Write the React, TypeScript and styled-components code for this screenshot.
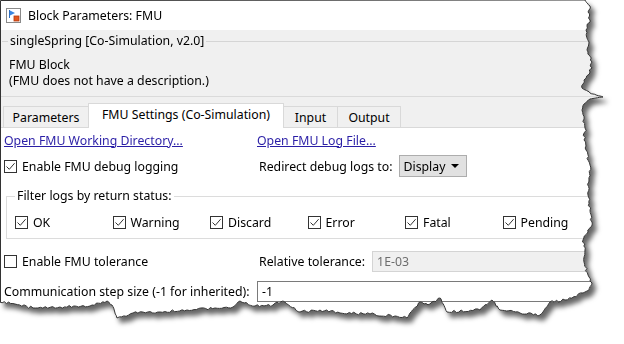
import React from 'react'
import styled, { createGlobalStyle } from 'styled-components'

const GlobalStyle = createGlobalStyle`
  html, body { margin: 0; padding: 0; background: #fff; }
  body {
    font-family: 'Noto Sans', 'Open Sans', sans-serif;
    font-size: 12.3px;
    color: #000;
  }
  * { box-sizing: border-box; }
`

// ---- torn paper edge ----
type Pt = [number, number]

const rightEdge: Pt[] = [
  [585, 0], [590, 6], [588, 12], [590, 20], [586, 30], [589, 42], [588, 52], [592, 62],
  [590, 72], [584, 80], [582, 88], [590, 93], [603, 97], [590, 99], [584, 104], [582, 110],
  [585, 128], [584, 140], [586, 150], [590, 165], [589, 180], [588, 195], [590, 210],
  [592, 222], [588, 232], [583, 240], [585, 250], [584, 262], [588, 275], [592, 283], [589, 290],
]

const bottomEdge: Pt[] = [
  [583, 293], [565, 300], [550, 302], [540, 315], [520, 313], [500, 310], [492, 300],
  [480, 310], [447, 312], [440, 298], [430, 304], [420, 302], [407, 318], [395, 316],
  [370, 314], [340, 313], [320, 310], [300, 312], [283, 301], [273, 305], [255, 306],
  [240, 301], [233, 307], [215, 308], [187, 310], [160, 312], [133, 313], [117, 318],
  [112, 305], [107, 301], [90, 306], [60, 307], [33, 308], [15, 304], [0, 302],
]

const noise = (i: number, seed: number) => {
  const v = Math.sin(i * 12.9898 + seed * 78.233) * 43758.5453
  return v - Math.floor(v) - 0.5
}

function roughen(points: Pt[], axis: 0 | 1, seed: number): Pt[] {
  const out: Pt[] = []
  let k = 0
  for (let i = 0; i < points.length - 1; i++) {
    const [ax, ay] = points[i]
    const [bx, by] = points[i + 1]
    const steps = Math.max(1, Math.ceil(Math.hypot(bx - ax, by - ay) / 2.5))
    for (let s = 0; s < steps; s++) {
      const t = s / steps
      const p: Pt = [ax + (bx - ax) * t, ay + (by - ay) * t]
      if (s > 0) p[axis] += noise(k++, seed) * 2.6
      out.push(p)
    }
  }
  out.push(points[points.length - 1])
  return out
}

const edgePoints: Pt[] = [
  [0.5, 0.5],
  ...roughen(rightEdge, 0, 3),
  ...roughen(bottomEdge, 1, 7),
  [0.5, 302],
]

const clipPolygon = edgePoints.map(([x, y]) => `${x.toFixed(1)}px ${y.toFixed(1)}px`).join(', ')
const edgePath = edgePoints.map(([x, y]) => `${x.toFixed(1)},${y.toFixed(1)}`).join(' ')

// ---- layout ----
const Page = styled.div`
  width: 624px;
  height: 344px;
  overflow: hidden;
  background: #fff;
`

const Sheet = styled.div`
  position: relative;
  width: 612px;
  height: 325px;
  filter: drop-shadow(4px 5px 2.5px rgba(0, 0, 0, 0.6));
`

const Window = styled.div`
  width: 612px;
  height: 325px;
  background: #fff;
  clip-path: polygon(${clipPolygon});
`

const EdgeLine = styled.svg`
  position: absolute;
  left: 0;
  top: 0;
  pointer-events: none;
`

const TitleBar = styled.div`
  height: 30px;
  display: flex;
  align-items: center;
  gap: 7px;
  padding: 1px 0 0 6px;
  background: #fff;
`

const Header = styled.div`
  height: 67px;
  background: #f0f0f0;
  border-bottom: 1px solid #dadada;
  padding-top: 1px;
`

const GroupTitle = styled.div`
  display: flex;
  align-items: center;
  height: 20px;
  line-height: 20px;
  padding-left: 2px;
`

const Rule = styled.span<{ $w?: number }>`
  height: 1px;
  background: #d5d5d5;
  ${(p) => (p.$w ? `width: ${p.$w}px;` : 'flex: 1;')}
`

const GroupText = styled.span`
  padding: 0 2px;
`

const Description = styled.div`
  margin-top: 6px;
  padding-left: 9px;
  line-height: 16px;
`

const TabStrip = styled.div`
  height: 31px;
  display: flex;
  align-items: flex-end;
  padding-left: 3px;
  background: #f0f0f0;
  border-bottom: 1px solid #d9d9d9;
`

const Tab = styled.div<{ $w: number; $active?: boolean }>`
  width: ${(p) => p.$w}px;
  height: ${(p) => (p.$active ? 25 : 21)}px;
  margin-right: -1px;
  margin-bottom: ${(p) => (p.$active ? -1 : 0)}px;
  display: flex;
  align-items: center;
  justify-content: center;
  padding-bottom: ${(p) => (p.$active ? 3 : 0)}px;
  background: ${(p) => (p.$active ? '#fff' : '#f0f0f0')};
  border: 1px solid #d9d9d9;
  border-bottom: none;
  position: relative;
  z-index: ${(p) => (p.$active ? 1 : 0)};
`

const Content = styled.div`
  background: #fff;
  padding-left: 4px;
  height: 200px;
`

const Row = styled.div<{ $top?: number; $h?: number }>`
  display: grid;
  grid-template-columns: 253px 1fr;
  align-items: center;
  height: ${(p) => p.$h ?? 24}px;
  margin-top: ${(p) => p.$top ?? 0}px;
  white-space: nowrap;
`

const Link = styled.a`
  color: #2a1ea6;
  text-decoration: underline;
  cursor: pointer;
  justify-self: start;
`

const CheckLabel = styled.label`
  display: flex;
  align-items: center;
  gap: 5px;
  white-space: nowrap;
`

const Box = styled.span`
  width: 13px;
  height: 13px;
  border: 1px solid #333;
  background: #fff;
  display: inline-flex;
  align-items: center;
  justify-content: center;
`

const Field = styled.div`
  display: flex;
  align-items: center;
  gap: 7px;
  padding-left: 2px;
  white-space: nowrap;
`

const Dropdown = styled.div`
  width: 68px;
  height: 22px;
  display: flex;
  align-items: center;
  justify-content: space-between;
  padding: 0 7px 0 3px;
  background: #e1e1e1;
  border: 1px solid #adadad;
`

const Caret = styled.span`
  width: 0;
  height: 0;
  border-left: 4px solid transparent;
  border-right: 4px solid transparent;
  border-top: 4px solid #000;
`

const FilterSet = styled.fieldset`
  margin: 10px 0 0 2px;
  width: 640px;
  padding: 8px 0 6px 8px;
  border: 1px solid #dcdcdc;
  min-width: 0;
`

const Legend = styled.legend`
  padding: 0 2px;
  line-height: 16px;
`

const StatusGrid = styled.div`
  display: grid;
  grid-template-columns: repeat(6, 97.5px);
  height: 20px;
  align-items: center;
`

const TextInput = styled.div<{ $disabled?: boolean }>`
  flex: 1;
  height: 21px;
  display: flex;
  align-items: center;
  padding-left: 4px;
  background: ${(p) => (p.$disabled ? '#f0f0f0' : '#fff')};
  border: 1px solid ${(p) => (p.$disabled ? '#d4d4d4' : '#7a7a7a')};
  color: ${(p) => (p.$disabled ? '#6d6d6d' : '#000')};
`

const BlockIcon = () => (
  <svg width="15" height="15" viewBox="0 0 15 15">
    <rect x="0.5" y="0.5" width="14" height="14" fill="#fff" stroke="#8a8a8a" />
    <line x1="3.5" y1="2" x2="3.5" y2="10" stroke="#2f6fc0" />
    <path d="M4 2.5 L9 5 L4 7.5 Z" fill="#3a86e0" />
    <rect x="8" y="8" width="5" height="5" fill="#e2571e" stroke="#b53a10" strokeWidth="0.8" />
  </svg>
)

const Check = ({ on, label }: { on?: boolean; label: string }) => (
  <CheckLabel>
    <Box>
      {on && (
        <svg width="11" height="11" viewBox="0 0 11 11">
          <path d="M1.5 5.5 L4.3 8.3 L9.6 2.2" fill="none" stroke="#333" strokeWidth="1" />
        </svg>
      )}
    </Box>
    {label}
  </CheckLabel>
)

const statuses = ['OK', 'Warning', 'Discard', 'Error', 'Fatal', 'Pending']

export default function App() {
  return (
    <Page>
      <GlobalStyle />
      <Sheet>
        <Window>
          <TitleBar>
            <BlockIcon />
            <span>Block Parameters: FMU</span>
          </TitleBar>
          <Header>
            <GroupTitle>
              <Rule $w={6} />
              <GroupText>singleSpring [Co-Simulation, v2.0]</GroupText>
              <Rule />
            </GroupTitle>
            <Description>
              FMU Block
              <br />
              (FMU does not have a description.)
            </Description>
          </Header>
          <TabStrip>
            <Tab $w={86}>Parameters</Tab>
            <Tab $w={196} $active>
              FMU Settings (Co-Simulation)
            </Tab>
            <Tab $w={55}>Input</Tab>
            <Tab $w={64}>Output</Tab>
          </TabStrip>
          <Content>
            <Row>
              <Link>Open FMU Working Directory...</Link>
              <Link>Open FMU Log File...</Link>
            </Row>
            <Row $top={2}>
              <Check on label="Enable FMU debug logging" />
              <Field>
                Redirect debug logs to:
                <Dropdown>
                  Display
                  <Caret />
                </Dropdown>
              </Field>
            </Row>
            <FilterSet>
              <Legend>Filter logs by return status:</Legend>
              <StatusGrid>
                {statuses.map((s) => (
                  <Check key={s} on label={s} />
                ))}
              </StatusGrid>
            </FilterSet>
            <Row $top={11} $h={22}>
              <Check label="Enable FMU tolerance" />
              <Field>
                Relative tolerance:
                <TextInput $disabled>1E-03</TextInput>
              </Field>
            </Row>
            <Row $top={8} $h={22}>
              <span>Communication step size (-1 for inherited):</span>
              <TextInput>-1</TextInput>
            </Row>
          </Content>
        </Window>
        <EdgeLine width="612" height="325" viewBox="0 0 612 325">
          <polygon points={edgePath} fill="none" stroke="#333" strokeWidth="1" />
        </EdgeLine>
      </Sheet>
    </Page>
  )
}
